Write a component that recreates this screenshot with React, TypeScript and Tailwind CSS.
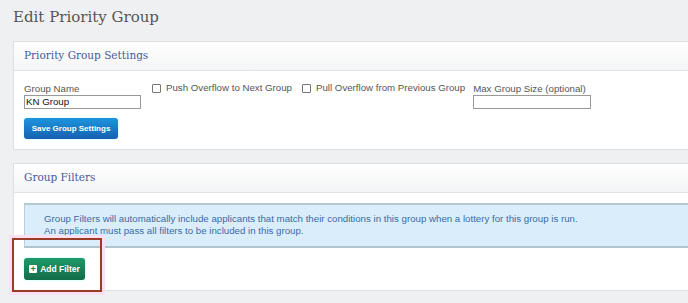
import React from "react";

function PanelHeader({ title }: { title: string }) {
  return (
    <div className="h-[29px] flex items-center px-[10px] border-b border-[#dde3e6] bg-gradient-to-b from-white to-[#f4f5f6]">
      <span className="text-[10.5px] text-[#46599c] font-['DejaVu_Serif',serif]">{title}</span>
    </div>
  );
}

function Checkbox({ label }: { label: string }) {
  return (
    <label className="flex items-center gap-[5px] h-[13px]">
      <span className="w-[9px] h-[9px] border border-[#777] rounded-[1px] bg-white" />
      <span>{label}</span>
    </label>
  );
}

export default function App() {
  return (
    <div className="relative w-[688px] h-[303px] overflow-hidden bg-[#eff0f2] font-['Liberation_Sans',Arial,sans-serif] text-[9.7px] text-[#555]">
      <h1 className="h-[41px] pl-[13px] pt-[5px] text-[15px] leading-[24px] text-[#555] font-['DejaVu_Serif',serif]">
        Edit Priority Group
      </h1>

      {/* Priority Group Settings */}
      <div className="ml-[13px] w-[700px] bg-white border border-[#dde0e2]">
        <PanelHeader title="Priority Group Settings" />
        <div className="px-[10px] pt-[11px] pb-[10px] flex items-start">
          <div className="w-[117px] flex flex-col">
            <span className="leading-[13px]">Group Name</span>
            <div className="h-[14px] border border-[#999] px-[1px] leading-[12px] text-[#111]">KN Group</div>
            <button className="mt-[9px] w-[94px] h-[21px] rounded-[3px] bg-gradient-to-b from-[#1e95de] to-[#1660b0] text-white font-bold text-[8px] whitespace-nowrap shadow-[0_0_2px_#9ff]">
              Save Group Settings
            </button>
          </div>
          <div className="ml-[11px]">
            <Checkbox label="Push Overflow to Next Group" />
          </div>
          <div className="ml-[10px]">
            <Checkbox label="Pull Overflow from Previous Group" />
          </div>
          <div className="ml-[8px] flex flex-col">
            <span className="leading-[13px]">Max Group Size (optional)</span>
            <div className="w-[118px] h-[14px] border border-[#999] bg-white" />
          </div>
        </div>
      </div>

      {/* Group Filters */}
      <div className="ml-[13px] mt-[13px] w-[700px] bg-white border border-[#dde0e2]">
        <PanelHeader title="Group Filters" />
        <div className="px-[10px] pt-[10px] pb-[10px]">
          <div className="h-[45px] border border-[#b9cfd8] border-t-2 border-t-[#b5c7cf] border-b-2 border-b-[#b0c6cf] bg-[#d9eefa] pl-[19px] pt-[8px] text-[#3c6aa6] leading-[12px]">
            <p>Group Filters will automatically include applicants that match their conditions in this group when a lottery for this group is run.</p>
            <p>An applicant must pass all filters to be included in this group.</p>
          </div>
          <button className="mt-[10px] h-[22px] w-[61px] rounded-[3px] bg-gradient-to-b from-[#1f9a6a] to-[#146b48] text-white font-bold text-[8.5px] whitespace-nowrap flex items-center justify-center gap-[3px] shadow-[0_0_2px_#9ff]">
            <span className="w-[8px] h-[8px] bg-white rounded-[1px] flex items-center justify-center text-[#1a8058] text-[9px] leading-[8px] font-bold">+</span>
            Add Filter
          </button>
        </div>
      </div>

      {/* annotation highlight */}
      <div className="absolute left-[9px] top-[235px] w-[96px] h-[60px] border-[3px] border-[#fbe0f4] rounded-[1px] pointer-events-none">
        <div className="w-full h-full border-2 border-[#9a3b25]" />
      </div>
    </div>
  );
}
